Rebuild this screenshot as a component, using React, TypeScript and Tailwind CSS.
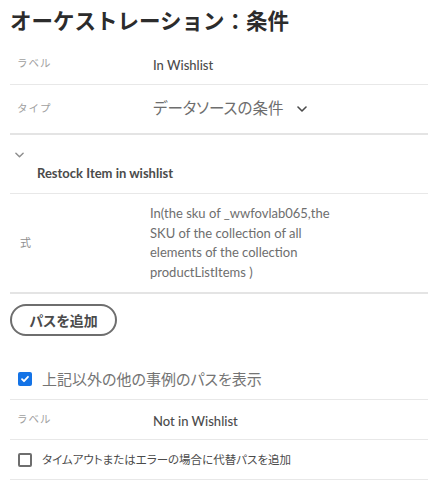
import React from 'react';

const font = "font-['Lato','Noto_Sans_CJK_JP',sans-serif] [font-feature-settings:'palt']";

function Chevron({ className }: { className?: string }) {
  return (
    <svg viewBox="0 0 10 6" className={className} fill="none" stroke="currentColor" strokeWidth="1.6" strokeLinecap="round" strokeLinejoin="round">
      <path d="M1 1l4 4 4-4" />
    </svg>
  );
}

function LabelRow({ label, children, className }: { label: string; children: React.ReactNode; className?: string }) {
  return (
    <div className={`flex items-center border-b border-[#e8e8e8] ${className ?? 'h-[41px]'}`}>
      <div className="w-[143px] pl-[7px] text-[10.5px] tracking-[1px] text-[#a0a0a0] [font-feature-settings:normal]">{label}</div>
      <div className="flex-1">{children}</div>
    </div>
  );
}

export default function App() {
  return (
    <div className={`w-[428px] h-[494px] bg-white pl-[10px] overflow-hidden ${font}`}>
      {/* Title */}
      <h1 className="pt-[6px] mb-[8px] leading-[30px] text-[21.5px] font-bold text-[#2c2c2c] [font-feature-settings:normal]">
        オーケストレーション：条件
      </h1>

      <LabelRow label="ラベル">
        <span className="text-[13px] font-medium text-[#4b4b4b]">In Wishlist</span>
      </LabelRow>

      <div className="flex items-center h-[50px] border-b-2 border-[#e4e4e4]">
        <div className="w-[143px] pl-[7px] text-[10.5px] tracking-[1px] text-[#a0a0a0] [font-feature-settings:normal]">タイプ</div>
        <div className="flex items-center gap-[13px] text-[15.5px] text-[#6e6e6e]">
          <span>データソースの条件</span>
          <Chevron className="w-[10px] h-[6px] text-[#4b4b4b]" />
        </div>
      </div>

      {/* Collapsible section */}
      <div className="pt-[14px] pb-[11px] border-b border-[#e8e8e8]">
        <div className="h-[12px] flex items-center pl-[5px]">
          <Chevron className="w-[9px] h-[6px] text-[#8e8e8e]" />
        </div>
        <div className="mt-[3px] pl-[27px] leading-[18px] text-[13px] font-bold text-[#4b4b4b]">
          Restock Item in wishlist
        </div>
      </div>

      <div className="flex items-center py-[10px] border-b-2 border-[#e4e4e4]">
        <div className="w-[140px] pl-[10px] text-[11px] text-[#8e8e8e]">式</div>
        <div className="w-[190px] text-[13px] leading-[19.5px] text-[#6e6e6e]">
          In(the sku of _wwfovlab065,the SKU of the collection of all elements of the collection productListItems )
        </div>
      </div>

      <button className="mt-[10px] h-[32px] w-[107px] rounded-full border-2 border-[#6e6e6e] text-[14px] font-bold text-[#4b4b4b] flex items-center justify-center">
        パスを追加
      </button>

      <div className="mt-[23px] h-[41px] flex items-center gap-[10px] pl-[8px] border-b border-[#e8e8e8]">
        <span className="w-[14px] h-[14px] rounded-[2px] bg-[#1473e6] flex items-center justify-center">
          <svg viewBox="0 0 10 10" className="w-[10px] h-[10px]" fill="none" stroke="white" strokeWidth="1.8" strokeLinecap="round" strokeLinejoin="round">
            <path d="M2 5.2l2 2 4-4.4" />
          </svg>
        </span>
        <span className="text-[15px] text-[#747474]">上記以外の他の事例のパスを表示</span>
      </div>

      <LabelRow label="ラベル" className="h-[40px]">
        <span className="text-[13px] font-medium text-[#4b4b4b]">Not in Wishlist</span>
      </LabelRow>

      <div className="h-[40px] flex items-center gap-[10px] pl-[8px] border-b border-[#e8e8e8]">
        <span className="w-[14px] h-[14px] rounded-[2px] border-2 border-[#6e6e6e]" />
        <span className="text-[11.5px] text-[#4b4b4b]">タイムアウトまたはエラーの場合に代替パスを追加</span>
      </div>
    </div>
  );
}
